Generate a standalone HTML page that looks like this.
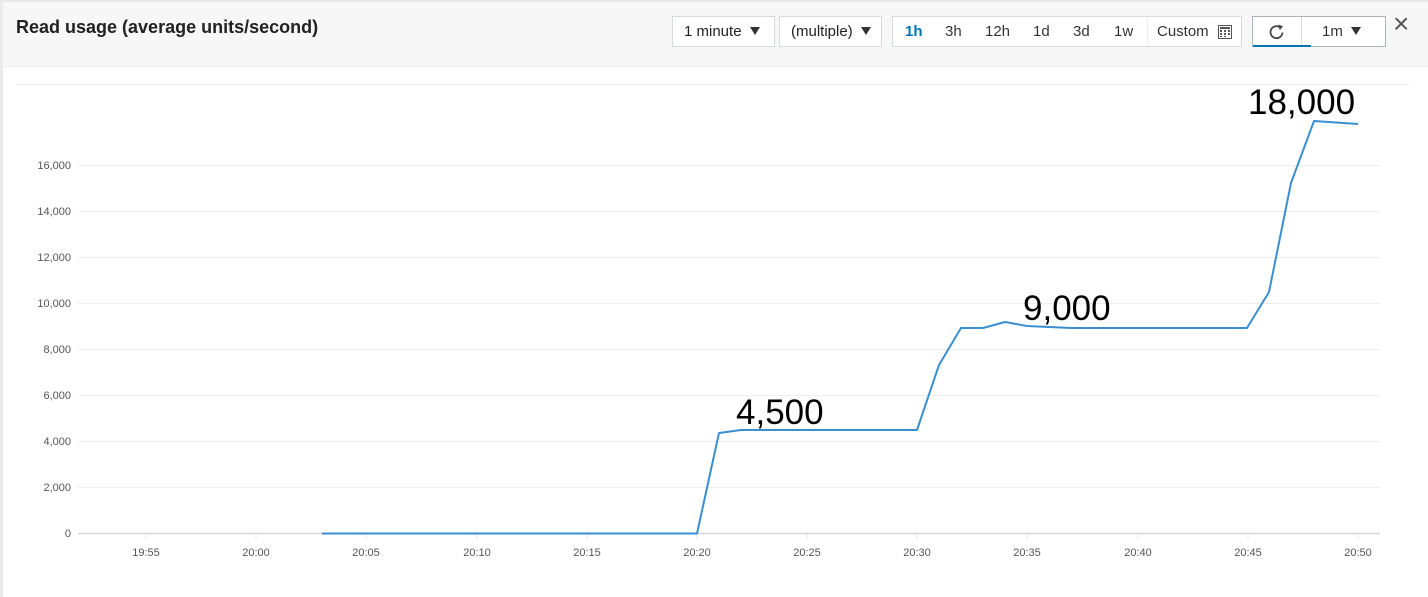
<!DOCTYPE html>
<html><head><meta charset="utf-8"><style>
html,body{margin:0;padding:0;width:1428px;height:597px;overflow:hidden;background:#fff;font-family:"Liberation Sans",sans-serif}
.hdr{position:absolute;left:0;top:0;width:1428px;height:67px;background:#f7f7f7;border-top:2px solid #e8e8e8;border-bottom:1px solid #ececec;box-sizing:border-box}
.lb{position:absolute;left:0;top:0;width:3px;height:597px;background:#eaeaea}
.title{position:absolute;left:16px;top:17px;font-size:18px;font-weight:bold;color:#222}
.box{position:absolute;top:16px;height:31px;background:#fff;border:1px solid #d5dbdb;box-sizing:border-box;font-size:15px;color:#222;line-height:29px}
.tri{display:inline-block;width:0;height:0;border-left:5px solid transparent;border-right:5px solid transparent;border-top:8px solid #333;margin-left:8px;vertical-align:1px}
.r{position:absolute;top:0;font-size:15px;color:#333}
svg text{font-family:"Liberation Sans",sans-serif}
</style></head><body>
<div class="hdr"></div>
<div class="lb"></div>
<div class="title">Read usage (average units/second)</div>
<div class="box" style="left:672px;width:103px;padding-left:11px">1 minute<span class="tri"></span></div>
<div class="box" style="left:779px;width:103px;padding-left:11px">(multiple)<span class="tri"></span></div>
<div class="box" style="left:892px;width:350px">
<span class="r" style="left:12px;color:#0073bb;font-weight:bold">1h</span>
<span class="r" style="left:52px">3h</span>
<span class="r" style="left:92px">12h</span>
<span class="r" style="left:140px">1d</span>
<span class="r" style="left:180px">3d</span>
<span class="r" style="left:221px">1w</span>
<span style="position:absolute;left:254px;top:0;width:1px;height:29px;background:#eee"></span>
<span class="r" style="left:264px">Custom</span>
<svg style="position:absolute;left:325px;top:8px" width="14" height="14"><rect x="0.5" y="0.5" width="13" height="13" fill="#fff" stroke="#555"/><g fill="#555"><rect x="2" y="2" width="10" height="2"/><rect x="2" y="5" width="2" height="2"/><rect x="6" y="5" width="2" height="2"/><rect x="10" y="5" width="2" height="2"/><rect x="2" y="8" width="2" height="2"/><rect x="6" y="8" width="2" height="2"/><rect x="10" y="8" width="2" height="2"/><rect x="2" y="11" width="2" height="1"/><rect x="6" y="11" width="2" height="1"/></g></svg>
</div>
<div class="box" style="left:1252px;width:134px;border-color:#aab7b8">
<svg style="position:absolute;left:14px;top:5px" width="20" height="20" viewBox="0 0 20 20"><path d="M15.5 10.5a6 6 0 1 1-2.5-5.2" fill="none" stroke="#444" stroke-width="1.8"/><path d="M11 2.5l5 1.8-3.2 4z" fill="#444"/></svg>
<span style="position:absolute;left:48px;top:0;width:1px;height:29px;background:#d5dbdb"></span>
<span style="position:absolute;left:0;bottom:-1px;width:58px;height:2px;background:#0073bb"></span>
<span class="r" style="left:69px">1m<span class="tri"></span></span>
</div>
<div style="position:absolute;left:1393px;top:10px;font-size:28px;color:#555;font-weight:300;line-height:28px">×</div>
<svg style="position:absolute;left:0;top:0" width="1428" height="597">
<g stroke="#eeeeee" stroke-width="1">
<line x1="16" y1="84.5" x2="1410" y2="84.5"/>
<line x1="78" y1="165.5" x2="1380" y2="165.5"/>
<line x1="78" y1="211.5" x2="1380" y2="211.5"/>
<line x1="78" y1="257.5" x2="1380" y2="257.5"/>
<line x1="78" y1="303.5" x2="1380" y2="303.5"/>
<line x1="78" y1="349.5" x2="1380" y2="349.5"/>
<line x1="78" y1="395.5" x2="1380" y2="395.5"/>
<line x1="78" y1="441.5" x2="1380" y2="441.5"/>
<line x1="78" y1="487.5" x2="1380" y2="487.5"/>
</g>
<line x1="78" y1="533.5" x2="1380" y2="533.5" stroke="#d5d5d5" stroke-width="1.5"/>
<g stroke="#e5e5e5"><line x1="146" y1="534" x2="146" y2="539"/><line x1="256" y1="534" x2="256" y2="539"/><line x1="366" y1="534" x2="366" y2="539"/><line x1="477" y1="534" x2="477" y2="539"/><line x1="587" y1="534" x2="587" y2="539"/><line x1="697" y1="534" x2="697" y2="539"/><line x1="807" y1="534" x2="807" y2="539"/><line x1="917" y1="534" x2="917" y2="539"/><line x1="1027" y1="534" x2="1027" y2="539"/><line x1="1138" y1="534" x2="1138" y2="539"/><line x1="1248" y1="534" x2="1248" y2="539"/><line x1="1358" y1="534" x2="1358" y2="539"/></g>
<g font-size="11" fill="#555" text-anchor="end">
<text x="71" y="169">16,000</text><text x="71" y="215">14,000</text><text x="71" y="261">12,000</text><text x="71" y="307">10,000</text><text x="71" y="353">8,000</text><text x="71" y="399">6,000</text><text x="71" y="445">4,000</text><text x="71" y="491">2,000</text><text x="71" y="537">0</text>
</g>
<g font-size="11" fill="#555" text-anchor="middle">
<text x="146" y="556">19:55</text><text x="256" y="556">20:00</text><text x="366" y="556">20:05</text><text x="477" y="556">20:10</text><text x="587" y="556">20:15</text><text x="697" y="556">20:20</text><text x="807" y="556">20:25</text><text x="917" y="556">20:30</text><text x="1027" y="556">20:35</text><text x="1138" y="556">20:40</text><text x="1248" y="556">20:45</text><text x="1358" y="556">20:50</text>
</g>
<polyline fill="none" stroke="#3a8fd0" stroke-width="2" stroke-linejoin="round" points="322,533.5 697,533.5 719,433 741,430 917,430 939,365 961,328 983,328 1005,322 1027,326 1071,328 1247,328 1269,292 1291,183 1314,121 1358,124"/>
<g font-size="35" fill="#000">
<text x="736" y="424">4,500</text>
<text x="1023" y="320">9,000</text>
<text x="1248" y="114">18,000</text>
</g>
</svg>
</body></html>
